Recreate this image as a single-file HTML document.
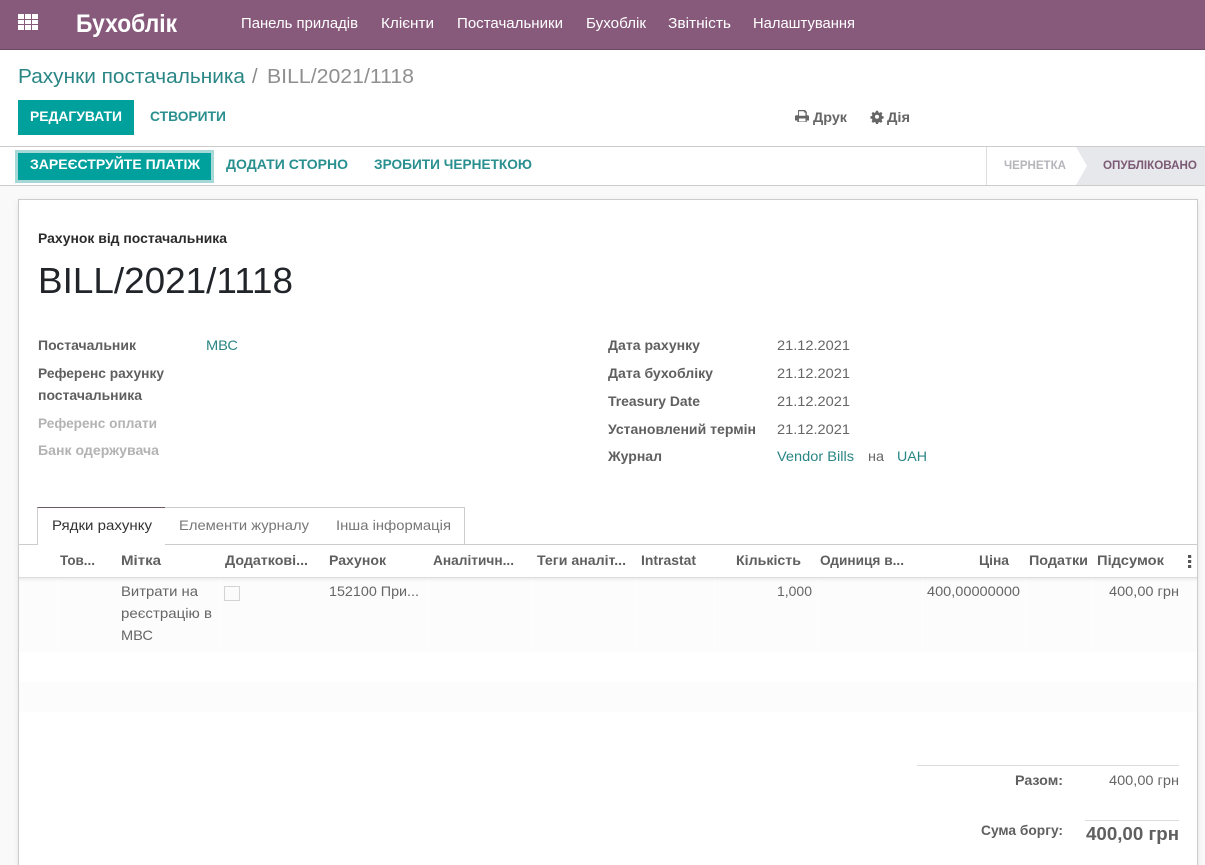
<!DOCTYPE html>
<html lang="uk"><head><meta charset="utf-8"><title>Бухоблік</title>
<style>
html,body{margin:0;padding:0;width:1205px;height:865px;overflow:hidden;background:#fff}
#w{position:relative;width:1205px;height:865px;overflow:hidden}
.b{position:absolute;box-sizing:border-box}
svg{position:absolute;left:0;top:0}
text{font-family:"Liberation Sans",sans-serif;font-size:14px;fill:#666}
.s{font-weight:bold;fill:#5f5f5f}
.l{fill:#2a8585}
.n{fill:#fff;font-size:14.5px}
.u{font-weight:bold;font-size:14px;fill:#2a8f8f}
.h{font-weight:bold;fill:#5f5f5f;font-size:14px}
.g{font-weight:bold;fill:#b3b3b3}
</style></head><body><div id="w">
<div class="b" style="left:0;top:0;width:1205px;height:50px;background:#875a7b;border-bottom:1px solid #6b4a62"></div>
<div class="b" style="left:18px;top:100px;width:116px;height:35px;background:#00a09d"></div>
<div class="b" style="left:0;top:146px;width:1205px;height:40px;background:#fff;border-top:1px solid #ccc;border-bottom:1px solid #ccc"></div>
<div class="b" style="left:0;top:186px;width:1205px;height:679px;background:#f9f9f9"></div>
<div class="b" style="left:15px;top:150px;width:199px;height:33px;background:#a5d8d7"></div>
<div class="b" style="left:18px;top:153px;width:193px;height:27px;background:#00a09d"></div>
<div class="b" style="left:986px;top:147px;width:1px;height:38px;background:#ddd"></div>
<div class="b" style="left:18px;top:199px;width:1180px;height:680px;background:#fff;border:1px solid #ccc;box-shadow:0 2px 6px rgba(0,0,0,.08)"></div>
<div class="b" style="left:19px;top:544px;width:1178px;height:1px;background:#ccc"></div>
<div class="b" style="left:37px;top:507px;width:129px;height:38px;background:#fff;border:1px solid #ccc;border-bottom:0;border-top-color:#6b5a66"></div>
<div class="b" style="left:165px;top:507px;width:159px;height:37px;background:#fff;border:1px solid #ccc;border-bottom:0;border-left:0"></div>
<div class="b" style="left:323px;top:507px;width:142px;height:37px;background:#fff;border:1px solid #ccc;border-bottom:0;border-left:0"></div>
<div class="b" style="left:19px;top:577px;width:1178px;height:75px;background:#fcfcfc;box-shadow:inset 0 6px 5px -5px rgba(0,0,0,.14)"></div>
<div class="b" style="left:19px;top:577px;width:1178px;height:1px;background:#dedede"></div>
<div class="b" style="left:19px;top:682px;width:1178px;height:30px;background:#fcfcfc"></div>
<div class="b" style="left:224px;top:586px;width:16px;height:15px;background:#fbfbfb;border:1px solid #d4d4d4"></div>
<div class="b" style="left:917px;top:765px;width:262px;height:1px;background:#ddd"></div>
<div class="b" style="left:1085px;top:820px;width:94px;height:1px;background:#ddd"></div>

<svg width="1205" height="865" viewBox="0 0 1205 865" xmlns="http://www.w3.org/2000/svg">
<g fill="#fefefe">
<rect x="57" y="580" width="1" height="72"/><rect x="220" y="580" width="1" height="72"/><rect x="428" y="580" width="1" height="72"/><rect x="532" y="580" width="1" height="72"/><rect x="636" y="580" width="1" height="72"/><rect x="714" y="580" width="1" height="72"/><rect x="817" y="580" width="1" height="72"/><rect x="922" y="580" width="1" height="72"/><rect x="1025" y="580" width="1" height="72"/><rect x="1092" y="580" width="1" height="72"/>
</g>
<g fill="#fff">
<rect x="18" y="14" width="6" height="5"/><rect x="25" y="14" width="6" height="5"/><rect x="32" y="14" width="6" height="5"/>
<rect x="18" y="20" width="6" height="4"/><rect x="25" y="20" width="6" height="4"/><rect x="32" y="20" width="6" height="4"/>
<rect x="18" y="25" width="6" height="5"/><rect x="25" y="25" width="6" height="5"/><rect x="32" y="25" width="6" height="5"/>
</g>
<text x="76" y="32" textLength="101" lengthAdjust="spacingAndGlyphs" style="font-size:25px;font-weight:bold;fill:#fff">Бухоблік</text>
<text class="n" x="241" y="28" textLength="117" lengthAdjust="spacingAndGlyphs">Панель приладів</text>
<text class="n" x="381" y="28" textLength="53" lengthAdjust="spacingAndGlyphs">Клієнти</text>
<text class="n" x="457" y="28" textLength="106" lengthAdjust="spacingAndGlyphs">Постачальники</text>
<text class="n" x="586" y="28" textLength="60" lengthAdjust="spacingAndGlyphs">Бухоблік</text>
<text class="n" x="668" y="28" textLength="63" lengthAdjust="spacingAndGlyphs">Звітність</text>
<text class="n" x="753" y="28" textLength="102" lengthAdjust="spacingAndGlyphs">Налаштування</text>

<text x="18" y="83" textLength="227" lengthAdjust="spacingAndGlyphs" style="font-size:20px;fill:#2a8585">Рахунки постачальника</text>
<text x="252" y="83" style="font-size:20px;fill:#888">/</text>
<text x="267" y="83" textLength="147" lengthAdjust="spacingAndGlyphs" style="font-size:20px;fill:#8f8f8f">BILL/2021/1118</text>

<text x="30" y="121" textLength="92" lengthAdjust="spacingAndGlyphs" style="font-weight:bold;fill:#fff">РЕДАГУВАТИ</text>
<text class="u" x="150" y="121" textLength="76" lengthAdjust="spacingAndGlyphs">СТВОРИТИ</text>

<path transform="translate(802 0) scale(.875 1) translate(-802 0)" fill="#666" d="M797.5 110h8l2 2v3.2h1.2c.7 0 1.3.6 1.3 1.3v4h-2.6v1.5h-10.800v-1.500h-2.600v-4c0-.7.6-1.300 1.300-1.300h2.200zm1.100 1.200v4.600h7.300v-3.300h-1.500v-1.300zm-.1 7.300v3h7.500v-3z" fill-rule="evenodd"/>
<text x="813" y="122" textLength="34" lengthAdjust="spacingAndGlyphs" style="font-weight:bold;fill:#666">Друк</text>
<path fill="#666" fill-rule="evenodd" d="M876 110h2.400l.5 1.900 1.300.5 1.700-1 1.700 1.700-1 1.700.5 1.300 1.900.5v2.400l-1.900.5-.5 1.300 1 1.700-1.700 1.700-1.700-1-1.300.5-.5 1.900H876l-.5-1.900-1.300-.5-1.700 1-1.700-1.700 1-1.700-.5-1.300-1.900-.5v-2.400l1.900-.5.5-1.300-1-1.700 1.700-1.700 1.700 1 1.300-.5zm1.200 4.600a2.400 2.400 0 1 0 0 4.800 2.400 2.400 0 0 0 0-4.800z" transform="translate(877 117) scale(.85) translate(-877.200 -117.300)"/>
<text x="887" y="122" textLength="23" lengthAdjust="spacingAndGlyphs" style="font-weight:bold;fill:#666">Дія</text>

<text x="30" y="169" textLength="170" lengthAdjust="spacingAndGlyphs" style="font-weight:bold;fill:#fff">ЗАРЕЄСТРУЙТЕ ПЛАТІЖ</text>
<text class="u" x="226" y="169" textLength="122" lengthAdjust="spacingAndGlyphs">ДОДАТИ СТОРНО</text>
<text class="u" x="374" y="169" textLength="158" lengthAdjust="spacingAndGlyphs">ЗРОБИТИ ЧЕРНЕТКОЮ</text>

<path fill="#e6e8eb" d="M1076 147H1205V185H1076L1087 166Z"/>
<text x="1004" y="169" textLength="62" lengthAdjust="spacingAndGlyphs" style="font-size:12px;font-weight:bold;fill:#b5b5bb">ЧЕРНЕТКА</text>
<text x="1103" y="169" textLength="94" lengthAdjust="spacingAndGlyphs" style="font-size:12px;font-weight:bold;fill:#7c5a75">ОПУБЛІКОВАНО</text>

<text x="38" y="243" textLength="189" lengthAdjust="spacingAndGlyphs" style="font-weight:bold;fill:#2b2b2b;font-size:13.500px">Рахунок від постачальника</text>
<text x="38" y="293" textLength="255" lengthAdjust="spacingAndGlyphs" style="font-size:36px;fill:#212529">BILL/2021/1118</text>

<text class="s" x="38" y="350" textLength="98" lengthAdjust="spacingAndGlyphs">Постачальник</text>
<text class="l" x="206" y="350" textLength="32" lengthAdjust="spacingAndGlyphs">МВС</text>
<text class="s" x="38" y="378" textLength="126" lengthAdjust="spacingAndGlyphs">Референс рахунку</text>
<text class="s" x="38" y="400" textLength="104" lengthAdjust="spacingAndGlyphs">постачальника</text>
<text class="g" x="38" y="428" textLength="119" lengthAdjust="spacingAndGlyphs">Референс оплати</text>
<text class="g" x="38" y="455" textLength="121" lengthAdjust="spacingAndGlyphs">Банк одержувача</text>

<text class="s" x="608" y="350" textLength="92" lengthAdjust="spacingAndGlyphs">Дата рахунку</text>
<text x="777" y="350" textLength="73" lengthAdjust="spacingAndGlyphs">21.12.2021</text>
<text class="s" x="608" y="378" textLength="105" lengthAdjust="spacingAndGlyphs">Дата бухобліку</text>
<text x="777" y="378" textLength="73" lengthAdjust="spacingAndGlyphs">21.12.2021</text>
<text class="s" x="608" y="406" textLength="92" lengthAdjust="spacingAndGlyphs">Treasury Date</text>
<text x="777" y="406" textLength="73" lengthAdjust="spacingAndGlyphs">21.12.2021</text>
<text class="s" x="608" y="434" textLength="148" lengthAdjust="spacingAndGlyphs">Установлений термін</text>
<text x="777" y="434" textLength="73" lengthAdjust="spacingAndGlyphs">21.12.2021</text>
<text class="s" x="608" y="461" textLength="54" lengthAdjust="spacingAndGlyphs">Журнал</text>
<text class="l" x="777" y="461" textLength="77" lengthAdjust="spacingAndGlyphs">Vendor Bills</text>
<text x="868" y="461" textLength="16" lengthAdjust="spacingAndGlyphs">на</text>
<text class="l" x="897" y="461" textLength="30" lengthAdjust="spacingAndGlyphs">UAH</text>

<text x="52" y="530" textLength="100" lengthAdjust="spacingAndGlyphs" style="fill:#333">Рядки рахунку</text>
<text x="179" y="530" textLength="130" lengthAdjust="spacingAndGlyphs" style="fill:#777">Елементи журналу</text>
<text x="336" y="530" textLength="115" lengthAdjust="spacingAndGlyphs" style="fill:#777">Інша інформація</text>

<text class="h" x="60" y="565" textLength="35" lengthAdjust="spacingAndGlyphs">Тов...</text>
<text class="h" x="121" y="565" textLength="40" lengthAdjust="spacingAndGlyphs">Мітка</text>
<text class="h" x="225" y="565" textLength="83" lengthAdjust="spacingAndGlyphs">Додаткові...</text>
<text class="h" x="329" y="565" textLength="57" lengthAdjust="spacingAndGlyphs">Рахунок</text>
<text class="h" x="433" y="565" textLength="81" lengthAdjust="spacingAndGlyphs">Аналітичн...</text>
<text class="h" x="537" y="565" textLength="89" lengthAdjust="spacingAndGlyphs">Теги аналіт...</text>
<text class="h" x="641" y="565" textLength="55" lengthAdjust="spacingAndGlyphs">Intrastat</text>
<text class="h" x="736" y="565" textLength="65" lengthAdjust="spacingAndGlyphs">Кількість</text>
<text class="h" x="820" y="565" textLength="84" lengthAdjust="spacingAndGlyphs">Одиниця в...</text>
<text class="h" x="979" y="565" textLength="30" lengthAdjust="spacingAndGlyphs">Ціна</text>
<text class="h" x="1029" y="565" textLength="59" lengthAdjust="spacingAndGlyphs">Податки</text>
<text class="h" x="1097" y="565" textLength="67" lengthAdjust="spacingAndGlyphs">Підсумок</text>
<g fill="#555"><rect x="1188" y="555" width="3.200" height="3"/><rect x="1188" y="560" width="3.200" height="3"/><rect x="1188" y="565" width="3.200" height="3"/></g>

<text x="121" y="596" textLength="77" lengthAdjust="spacingAndGlyphs">Витрати на</text>
<text x="121" y="618" textLength="91" lengthAdjust="spacingAndGlyphs">реєстрацію в</text>
<text x="121" y="640" textLength="32" lengthAdjust="spacingAndGlyphs">МВС</text>
<text x="329" y="596" textLength="90" lengthAdjust="spacingAndGlyphs">152100 При...</text>
<text x="777" y="596" textLength="35" lengthAdjust="spacingAndGlyphs">1,000</text>
<text x="927" y="596" textLength="93" lengthAdjust="spacingAndGlyphs">400,00000000</text>
<text x="1109" y="596" textLength="70" lengthAdjust="spacingAndGlyphs">400,00 грн</text>

<text class="s" x="1015" y="785" textLength="48" lengthAdjust="spacingAndGlyphs">Разом:</text>
<text x="1109" y="785" textLength="70" lengthAdjust="spacingAndGlyphs">400,00 грн</text>
<text class="s" x="981" y="835" textLength="82" lengthAdjust="spacingAndGlyphs">Сума боргу:</text>
<text x="1086" y="840" textLength="93" lengthAdjust="spacingAndGlyphs" style="font-size:18px;font-weight:bold;fill:#5f5f5f">400,00 грн</text>
</svg>
</div></body></html>
